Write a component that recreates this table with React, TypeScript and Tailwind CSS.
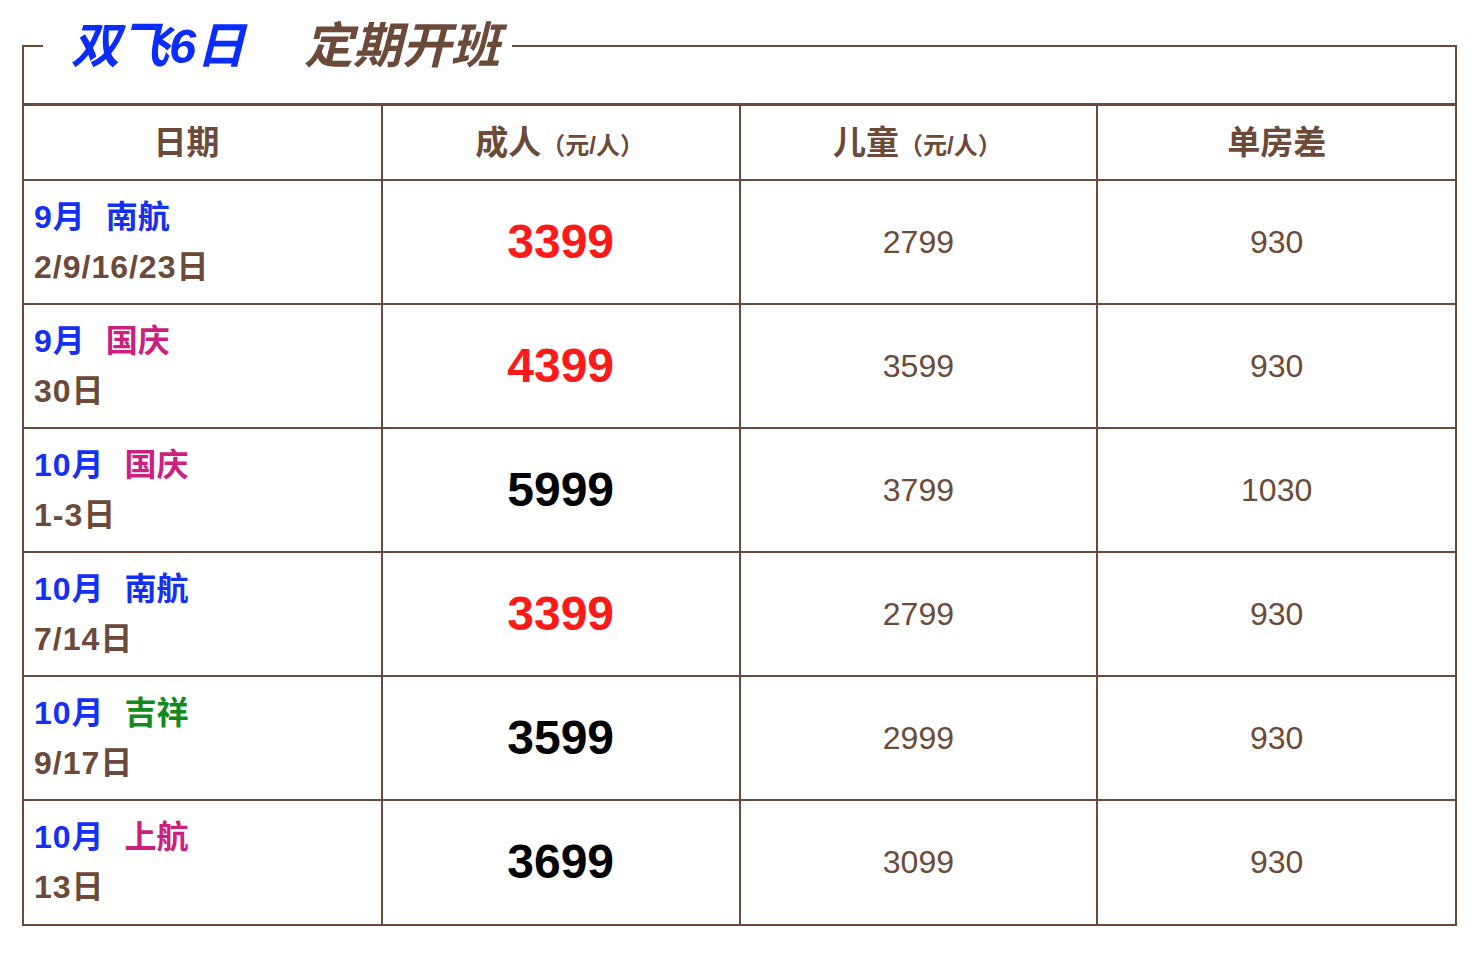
const rows = [
  { month: '9月', tag: '南航', tagColor: 'text-[#1530f5]', days: '2/9/16/23日', adult: '3399', hot: true, child: '2799', single: '930' },
  { month: '9月', tag: '国庆', tagColor: 'text-[#cc1f80]', days: '30日', adult: '4399', hot: true, child: '3599', single: '930' },
  { month: '10月', tag: '国庆', tagColor: 'text-[#cc1f80]', days: '1-3日', adult: '5999', hot: false, child: '3799', single: '1030' },
  { month: '10月', tag: '南航', tagColor: 'text-[#1530f5]', days: '7/14日', adult: '3399', hot: true, child: '2799', single: '930' },
  { month: '10月', tag: '吉祥', tagColor: 'text-[#128a1c]', days: '9/17日', adult: '3599', hot: false, child: '2999', single: '930' },
  { month: '10月', tag: '上航', tagColor: 'text-[#cc1f80]', days: '13日', adult: '3699', hot: false, child: '3099', single: '930' },
];

const App = () => {
  return (
    <div className="min-h-screen bg-white pt-[22px] font-['Liberation_Sans','Noto_Sans_CJK_SC',sans-serif] text-[#6b4a3a]">
      <fieldset className="ml-[22px] w-[1435px] border-2 border-[#6b4a3a]">
        <legend className="ml-[19px] pl-[28px] pr-[12px] text-[49px] leading-[48px] font-bold italic whitespace-nowrap">
          <span className="inline-block w-[233px] text-[#0a2cff]">双飞6日</span>
          <span className="text-[#6b4a3a]">定期开班</span>
        </legend>

        <table className="mt-[33px] w-full table-fixed border-collapse border-t-[3px] border-[#6b4a3a]">
          <thead>
            <tr className="h-[75px] border-b-2 border-[#6b4a3a]">
              <th className="pr-[32px] text-[33px] font-bold">日期</th>
              <th className="border-l-2 border-[#6b4a3a] pr-[2px] text-[33px] font-bold">
                成人<span className="text-[24px]">（元/人）</span>
              </th>
              <th className="border-l-2 border-[#6b4a3a] pr-[2px] text-[33px] font-bold">
                儿童<span className="text-[24px]">（元/人）</span>
              </th>
              <th className="border-l-2 border-[#6b4a3a] text-[33px] font-bold">单房差</th>
            </tr>
          </thead>
          <tbody>
            {rows.map((r, i) => (
              <tr key={i} className={'h-[124px] ' + (i < rows.length - 1 ? 'border-b-2 border-[#6b4a3a]' : '')}>
                <td className="pl-[10px] align-middle text-[32px] font-bold leading-[50px]">
                  <div>
                    <span className="tracking-[1px] text-[#1530f5]">{r.month}</span>
                    <span className={'ml-[20px] ' + r.tagColor}>{r.tag}</span>
                  </div>
                  <div className="tracking-[1px]">{r.days}</div>
                </td>
                <td
                  className={
                    'border-l-2 border-[#6b4a3a] text-center text-[48px] font-bold ' +
                    (r.hot ? 'text-[#ff1a1a]' : 'text-black')
                  }
                >
                  {r.adult}
                </td>
                <td className="border-l-2 border-[#6b4a3a] text-center text-[32px]">{r.child}</td>
                <td className="border-l-2 border-[#6b4a3a] text-center text-[32px]">{r.single}</td>
              </tr>
            ))}
          </tbody>
        </table>
      </fieldset>
    </div>
  );
};

export default App;
